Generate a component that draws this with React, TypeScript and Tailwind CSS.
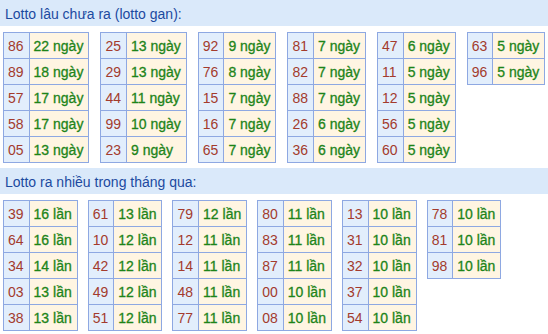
import React from "react";

type Row = [string, number];

const gan: Row[][] = [
  [["86", 22], ["89", 18], ["57", 17], ["58", 17], ["05", 13]],
  [["25", 13], ["29", 13], ["44", 11], ["99", 10], ["23", 9]],
  [["92", 9], ["76", 8], ["15", 7], ["16", 7], ["65", 7]],
  [["81", 7], ["82", 7], ["88", 7], ["26", 6], ["36", 6]],
  [["47", 6], ["11", 5], ["12", 5], ["56", 5], ["60", 5]],
  [["63", 5], ["96", 5]],
];

const nhieu: Row[][] = [
  [["39", 16], ["64", 16], ["34", 14], ["03", 13], ["38", 13]],
  [["61", 13], ["10", 12], ["42", 12], ["49", 12], ["51", 12]],
  [["79", 12], ["12", 11], ["14", 11], ["48", 11], ["77", 11]],
  [["80", 11], ["83", 11], ["87", 11], ["00", 10], ["08", 10]],
  [["13", 10], ["31", 10], ["32", 10], ["37", 10], ["54", 10]],
  [["78", 10], ["81", 10], ["98", 10]],
];

function LottoTable({ rows, unit }: { rows: Row[]; unit: string }) {
  return (
    <table className="shrink-0 border-collapse whitespace-nowrap">
      <tbody>
        {rows.map(([num, count]) => (
          <tr key={num} className="h-[26px]">
            <td className="border border-[#8ea8e2] bg-[#e2eefc] pl-[4px] pr-[5px] text-[14px] text-[#a33b2d]">{num}</td>
            <td className="border border-[#8ea8e2] bg-[#fff5e2] pl-[4px] pr-[5px] text-[14px] text-[#1d8419] [-webkit-text-stroke:0.3px_#1d8419]">
              {count} {unit}
            </td>
          </tr>
        ))}
      </tbody>
    </table>
  );
}

function Section({ title, tables, unit, gap }: { title: string; tables: Row[][]; unit: string; gap: string }) {
  return (
    <section>
      <div className="flex h-[26px] items-center bg-[#dae9fa] pl-[5px] pt-[1px] text-[14px] text-[#1c4aa0]">{title}</div>
      <div className={`mt-[6px] flex items-start pl-[3px] ${gap}`}>
        {tables.map((t, i) => (
          <LottoTable key={i} rows={t} unit={unit} />
        ))}
      </div>
    </section>
  );
}

export default function App() {
  return (
    <div className="h-[334px] w-[548px] overflow-hidden bg-white font-['Liberation_Sans',Arial,sans-serif] leading-none">
      <Section title="Lotto lâu chưa ra (lotto gan):" tables={gan} unit="ngày" gap="gap-x-[11px]" />
      <div className="mt-[5px]">
        <Section title="Lotto ra nhiều trong tháng qua:" tables={nhieu} unit="lần" gap="gap-x-[10px]" />
      </div>
    </div>
  );
}
